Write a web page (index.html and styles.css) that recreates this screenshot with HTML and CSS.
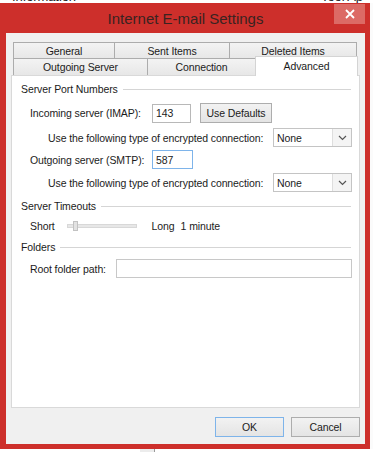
FILE: index.html
```html
<!DOCTYPE html>
<html lang="en">
<head>
    <meta charset="UTF-8">
    <meta name="viewport" content="width=device-width, initial-scale=1.0">
    <title>Internet E-mail Settings</title>
    <link rel="stylesheet" href="styles.css">
</head>
<body>
    <div class="desk-top">
        <span class="desk-text">Information</span>
        <span class="desk-text">Tool Ap</span>
    </div>
    <div class="desk-row">
        <div class="window">
            <div class="titlebar">
                <span></span>
                <span class="title">Internet E-mail Settings</span>
                <span class="close">
                    <svg width="10" height="10" viewBox="0 0 10 10">
                        <path d="M1 1 L9 9 M9 1 L1 9" stroke="#fff" stroke-width="1.8" fill="none"/>
                    </svg>
                </span>
            </div>

            <div class="client">
                <div class="tabs">
                    <div class="tab-row row-back">
                        <div class="tab t-general">General</div>
                        <div class="tab t-sent">Sent Items</div>
                        <div class="tab t-deleted">Deleted Items</div>
                    </div>
                    <div class="tab-row row-front">
                        <div class="tab t-outgoing">Outgoing Server</div>
                        <div class="tab t-connection">Connection</div>
                        <div class="tab t-advanced active">Advanced</div>
                    </div>
                </div>

                <div class="panel">
                    <div class="group-head head-ports">Server Port Numbers</div>

                    <div class="field-row row-imap">
                        <span class="label-w">Incoming server (IMAP):</span>
                        <span class="num-input">143</span>
                        <span class="btn btn-defaults">Use Defaults</span>
                    </div>
                    <div class="field-row enc-row row-enc1">
                        <span>Use the following type of encrypted connection:</span>
                        <span class="select">
                            <span class="select-value">None</span>
                            <span class="select-arrow">
                                <svg width="9" height="6" viewBox="0 0 9 6">
                                    <path d="M1 1 L4.5 4.5 L8 1" stroke="#555" stroke-width="1.2" fill="none"/>
                                </svg>
                            </span>
                        </span>
                    </div>
                    <div class="field-row row-smtp">
                        <span class="label-w">Outgoing server (SMTP):</span>
                        <span class="num-input wide focus">587</span>
                    </div>
                    <div class="field-row enc-row row-enc2">
                        <span>Use the following type of encrypted connection:</span>
                        <span class="select">
                            <span class="select-value">None</span>
                            <span class="select-arrow">
                                <svg width="9" height="6" viewBox="0 0 9 6">
                                    <path d="M1 1 L4.5 4.5 L8 1" stroke="#555" stroke-width="1.2" fill="none"/>
                                </svg>
                            </span>
                        </span>
                    </div>

                    <div class="group-head head-timeouts">Server Timeouts</div>
                    <div class="field-row row-timeout">
                        <span>Short</span>
                        <span class="slider"><span class="thumb"></span></span>
                        <span class="long">Long</span>
                        <span class="minute">1 minute</span>
                    </div>

                    <div class="group-head head-folders">Folders</div>
                    <div class="field-row row-root">
                        <span class="root-label">Root folder path:</span>
                        <span class="path-input"></span>
                    </div>
                </div>

                <div class="actions">
                    <span class="btn btn-ok">OK</span>
                    <span class="btn">Cancel</span>
                </div>
            </div>
        </div>
        <div class="desk-side"></div>
    </div>
    <div class="desk-bottom"><span class="desk-mark"></span></div>
</body>
</html>
```

FILE: styles.css
```css
* {
    box-sizing: border-box;
}
body {
    margin: 0;
    width: 373px;
    height: 452px;
    overflow: hidden;
    background: #fff;
    font-family: "Liberation Sans", Arial, sans-serif;
    font-size: 10.5px;
    letter-spacing: -0.1px;
    color: #1b1b1b;
}
.desk-top {
    height: 3px;
    overflow: hidden;
    display: flex;
    justify-content: space-between;
    padding: 0 10px 0 12px;
}
.desk-text {
    display: block;
    margin-top: -9px;
    font-size: 13px;
    line-height: 12px;
    color: #222;
}
.desk-row {
    display: flex;
}
.desk-side {
    flex: 1;
    background: #fbfbfb;
}
.desk-bottom {
    height: 3px;
    padding-left: 140px;
}
.desk-mark {
    display: block;
    width: 15px;
    height: 3px;
    background: #ececec;
    border-right: 1px solid #9a9a9a;
}

/* window frame */
.window {
    width: 370px;
    height: 446px;
    background: #cd2f2b;
    padding: 0 5px 5px 6px;
    display: flex;
    flex-direction: column;
}
.titlebar {
    height: 30px;
    display: grid;
    grid-template-columns: 31px 1fr 31px;
    align-items: center;
}
.title {
    text-align: center;
    font-size: 15px;
    letter-spacing: 0;
    color: #3a2321;
    padding-top: 1px;
}
.close {
    align-self: start;
    margin-top: 1px;
    height: 20px;
    background: #dc6a65;
    display: flex;
    align-items: center;
    justify-content: center;
}
.client {
    flex: 1;
    background: #f0f0f0;
    padding: 9px 5px 0 5px;
    display: flex;
    flex-direction: column;
}

/* tabs */
.tabs {
    padding: 0 2px;
}
.tab-row {
    display: flex;
}
.row-back {
    height: 16px;
}
.row-front {
    height: 17px;
}
.tab {
    border: 1px solid #acacac;
    border-bottom: none;
    margin-left: -1px;
    background: linear-gradient(#f3f3f3, #e7e7e7);
    display: flex;
    align-items: center;
    justify-content: center;
    color: #1b1b1b;
}
.row-back .tab {
    padding-top: 1px;
}
.t-general, .t-outgoing {
    margin-left: 0;
}
.t-general { width: 102px; }
.t-sent { width: 116px; }
.t-deleted { width: 128px; }
.t-outgoing { width: 135px; }
.t-connection { width: 109px; }
.t-advanced { width: 103px; }
.tab.active {
    background: #fff;
    border-color: #d4d4d4;
    height: 20px;
    margin-top: -2px;
    position: relative;
    z-index: 1;
    align-items: flex-start;
    padding-top: 3px;
}

/* panel */
.panel {
    background: #fff;
    border: 1px solid #d9d9d9;
    height: 333px;
}
.group-head {
    display: flex;
    align-items: center;
    height: 18px;
    padding: 0 8px 0 9px;
}
.group-head::after {
    content: "";
    flex: 1;
    border-top: 1px solid #d5d5d5;
    margin-left: 5px;
}
.head-ports { margin-top: 4px; }
.head-timeouts { margin-top: 5px; }
.head-folders { margin-top: 3px; }

.field-row {
    display: flex;
    align-items: center;
    padding-left: 18px;
    height: 19px;
}
.row-imap { margin-top: 5px; height: 20px; }
.row-enc1 { margin-top: 5px; }
.row-smtp { margin-top: 3px; }
.row-enc2 { margin-top: 4px; }
.row-timeout { margin-top: 2px; height: 18px; }
.row-root { margin-top: 3px; }

.label-w {
    width: 122px;
}
.num-input {
    width: 39px;
    height: 19px;
    border: 1px solid #b8b8b8;
    background: #fff;
    padding-left: 3px;
    display: flex;
    align-items: center;
}
.num-input.wide {
    width: 41px;
}
.num-input.focus {
    border-color: #7eb4ea;
}
.btn {
    width: 69px;
    height: 20px;
    border: 1px solid #adadad;
    background: linear-gradient(#f2f2f2, #e4e4e4);
    display: flex;
    align-items: center;
    justify-content: center;
    color: #1b1b1b;
}
.btn-defaults {
    width: 72px;
    margin-left: 9px;
}
.enc-row {
    padding-left: 36px;
    padding-right: 7px;
    justify-content: space-between;
}
.select {
    width: 79px;
    height: 19px;
    border: 1px solid #c4c4c4;
    background: #fff;
    display: flex;
}
.select-value {
    flex: 1;
    padding-left: 3px;
    display: flex;
    align-items: center;
}
.select-arrow {
    width: 19px;
    border-left: 1px solid #dedede;
    background: #f4f4f4;
    display: flex;
    align-items: center;
    justify-content: center;
}

.slider {
    width: 70px;
    height: 4px;
    margin-left: 12px;
    background: #e7e7e7;
    border: 1px solid #d8d8d8;
    display: flex;
    align-items: center;
    padding-left: 5px;
}
.thumb {
    width: 5px;
    height: 10px;
    background: #e2e2e2;
    border: 1px solid #c2c2c2;
}
.long {
    margin-left: 15px;
}
.minute {
    margin-left: 6px;
}
.root-label {
    width: 86px;
}
.path-input {
    width: 236px;
    height: 19px;
    border: 1px solid #c8c8c8;
    background: #fff;
}

.actions {
    display: flex;
    justify-content: flex-end;
    gap: 7px;
    margin-top: 9px;
}
.btn-ok {
    border-color: #7eb4ea;
}
```
